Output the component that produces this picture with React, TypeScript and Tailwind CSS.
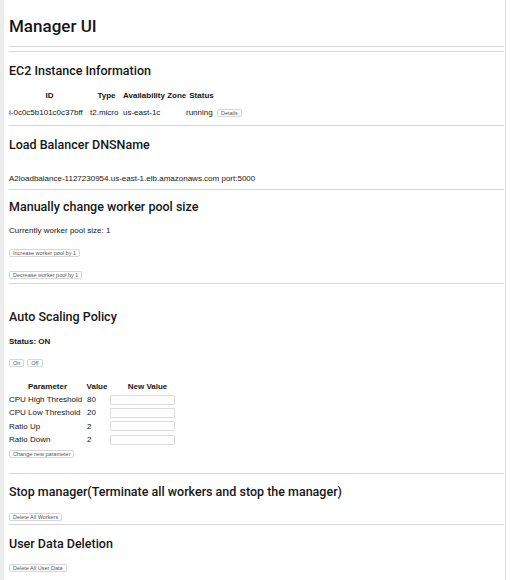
import React from "react";

const Btn = ({ children, className = "" }: { children: React.ReactNode; className?: string }) => (
  <button
    type="button"
    className={`h-[8px] px-[3px] text-[5.5px] leading-[6px] text-[#555] bg-white border border-[#d6d6d6] rounded-[2px] flex items-center whitespace-nowrap ${className}`}
  >
    {children}
  </button>
);

const H2 = ({ children, className = "" }: { children: React.ReactNode; className?: string }) => (
  <h2
    className={`text-[12.5px] leading-[14px] font-medium whitespace-nowrap ${className}`}
    style={{ fontFamily: "Roboto, 'Liberation Sans', Arial, sans-serif" }}
  >
    {children}
  </h2>
);

export default function App() {
  const params = [
    ["CPU High Threshold", "80"],
    ["CPU Low Threshold", "20"],
    ["Ratio Up", "2"],
    ["Ratio Down", "2"],
  ];
  return (
    <div
      className="flex min-h-[580px] bg-white text-[#161616]"
      style={{ fontFamily: "'Liberation Sans', Arial, sans-serif" }}
    >
      <div className="w-[4px] shrink-0 bg-[#ececec]" />
      <div className="w-[5px] shrink-0" />
      <div className="w-[495px] shrink-0 flex flex-col items-start pt-[16px]">
        <h1
          className="text-[17px] leading-[20px] font-medium"
          style={{ fontFamily: "Roboto, 'Liberation Sans', Arial, sans-serif" }}
        >
          Manager UI
        </h1>
        <div className="mt-[10px] h-[1px] w-full bg-[#d6d6d6]" />
        <div className="mt-[4px] h-[1px] w-full bg-[#d6d6d6]" />

        <H2 className="mt-[12px]">EC2 Instance Information</H2>
        <div className="mt-[13px] grid grid-cols-[81px_33px_63px_31px_auto] text-[8px] whitespace-nowrap">
          <div className="text-center font-bold leading-[10px]">ID</div>
          <div className="text-center font-bold leading-[10px]">Type</div>
          <div className="text-center font-bold leading-[10px]">Availability Zone</div>
          <div className="text-center font-bold leading-[10px]">Status</div>
          <div />
          <div className="mt-[6px] leading-[12px]">i-0c0c5b101c0c37bff</div>
          <div className="mt-[6px] leading-[12px]">t2.micro</div>
          <div className="mt-[6px] leading-[12px]">us-east-1c</div>
          <div className="mt-[6px] leading-[12px]">running</div>
          <div className="mt-[6px] h-[12px] flex items-center">
            <Btn>Details</Btn>
          </div>
        </div>
        <div className="mt-[6px] h-[1px] w-full bg-[#d6d6d6]" />

        <H2 className="mt-[12px]">Load Balancer DNSName</H2>
        <p className="mt-[22px] text-[8px] leading-[10px]">
          A2loadbalance-1127230954.us-east-1.elb.amazonaws.com port:5000
        </p>
        <div className="mt-[5px] h-[1px] w-full bg-[#d6d6d6]" />

        <H2 className="mt-[10px]">Manually change worker pool size</H2>
        <p className="mt-[12px] text-[8px] leading-[10px]">Currently worker pool size: 1</p>
        <Btn className="mt-[13px]">Increase worker pool by 1</Btn>
        <Btn className="mt-[14px]">Decrease worker pool by 1</Btn>
        <div className="mt-[4px] h-[1px] w-full bg-[#d6d6d6]" />

        <H2 className="mt-[26px]">Auto Scaling Policy</H2>
        <p className="mt-[13px] text-[8px] leading-[10px] font-bold">Status: ON</p>
        <div className="mt-[12px] flex gap-[3px]">
          <Btn>On</Btn>
          <Btn>Off</Btn>
        </div>
        <div className="mt-[15px] grid grid-cols-[77px_22px_79px] text-[8px] whitespace-nowrap">
          <div className="text-center font-bold leading-[10px]">Parameter</div>
          <div className="text-center font-bold leading-[10px]">Value</div>
          <div className="text-center font-bold leading-[10px]">New Value</div>
          {params.map(([name, val], i) => (
            <React.Fragment key={name}>
              <div className={`${i === 0 ? "mt-[1px]" : ""} h-[13.33px] leading-[13.33px]`}>{name}</div>
              <div className={`${i === 0 ? "mt-[1px]" : ""} h-[13.33px] leading-[13.33px] pl-[1px]`}>{val}</div>
              <div className={`${i === 0 ? "mt-[1px]" : ""} h-[13.33px] flex items-center pl-[2px]`}>
                <input
                  type="text"
                  className="w-[65px] h-[10px] border border-[#dcdcdc] rounded-[1px] bg-white outline-none"
                />
              </div>
            </React.Fragment>
          ))}
        </div>
        <Btn className="mt-[4px]">Change new parameter</Btn>
        <div className="mt-[15px] h-[1px] w-full bg-[#d6d6d6]" />

        <H2 className="mt-[11px]">Stop manager(Terminate all workers and stop the manager)</H2>
        <Btn className="mt-[14px]">Delete All Workers</Btn>
        <div className="mt-[3px] h-[1px] w-full bg-[#d6d6d6]" />

        <H2 className="mt-[12px]">User Data Deletion</H2>
        <Btn className="mt-[13px]">Delete All User Data</Btn>
      </div>
      <div className="w-[1px] shrink-0" />
      <div className="w-[1px] shrink-0 bg-[#dedede]" />
      <div className="flex-1" />
    </div>
  );
}
